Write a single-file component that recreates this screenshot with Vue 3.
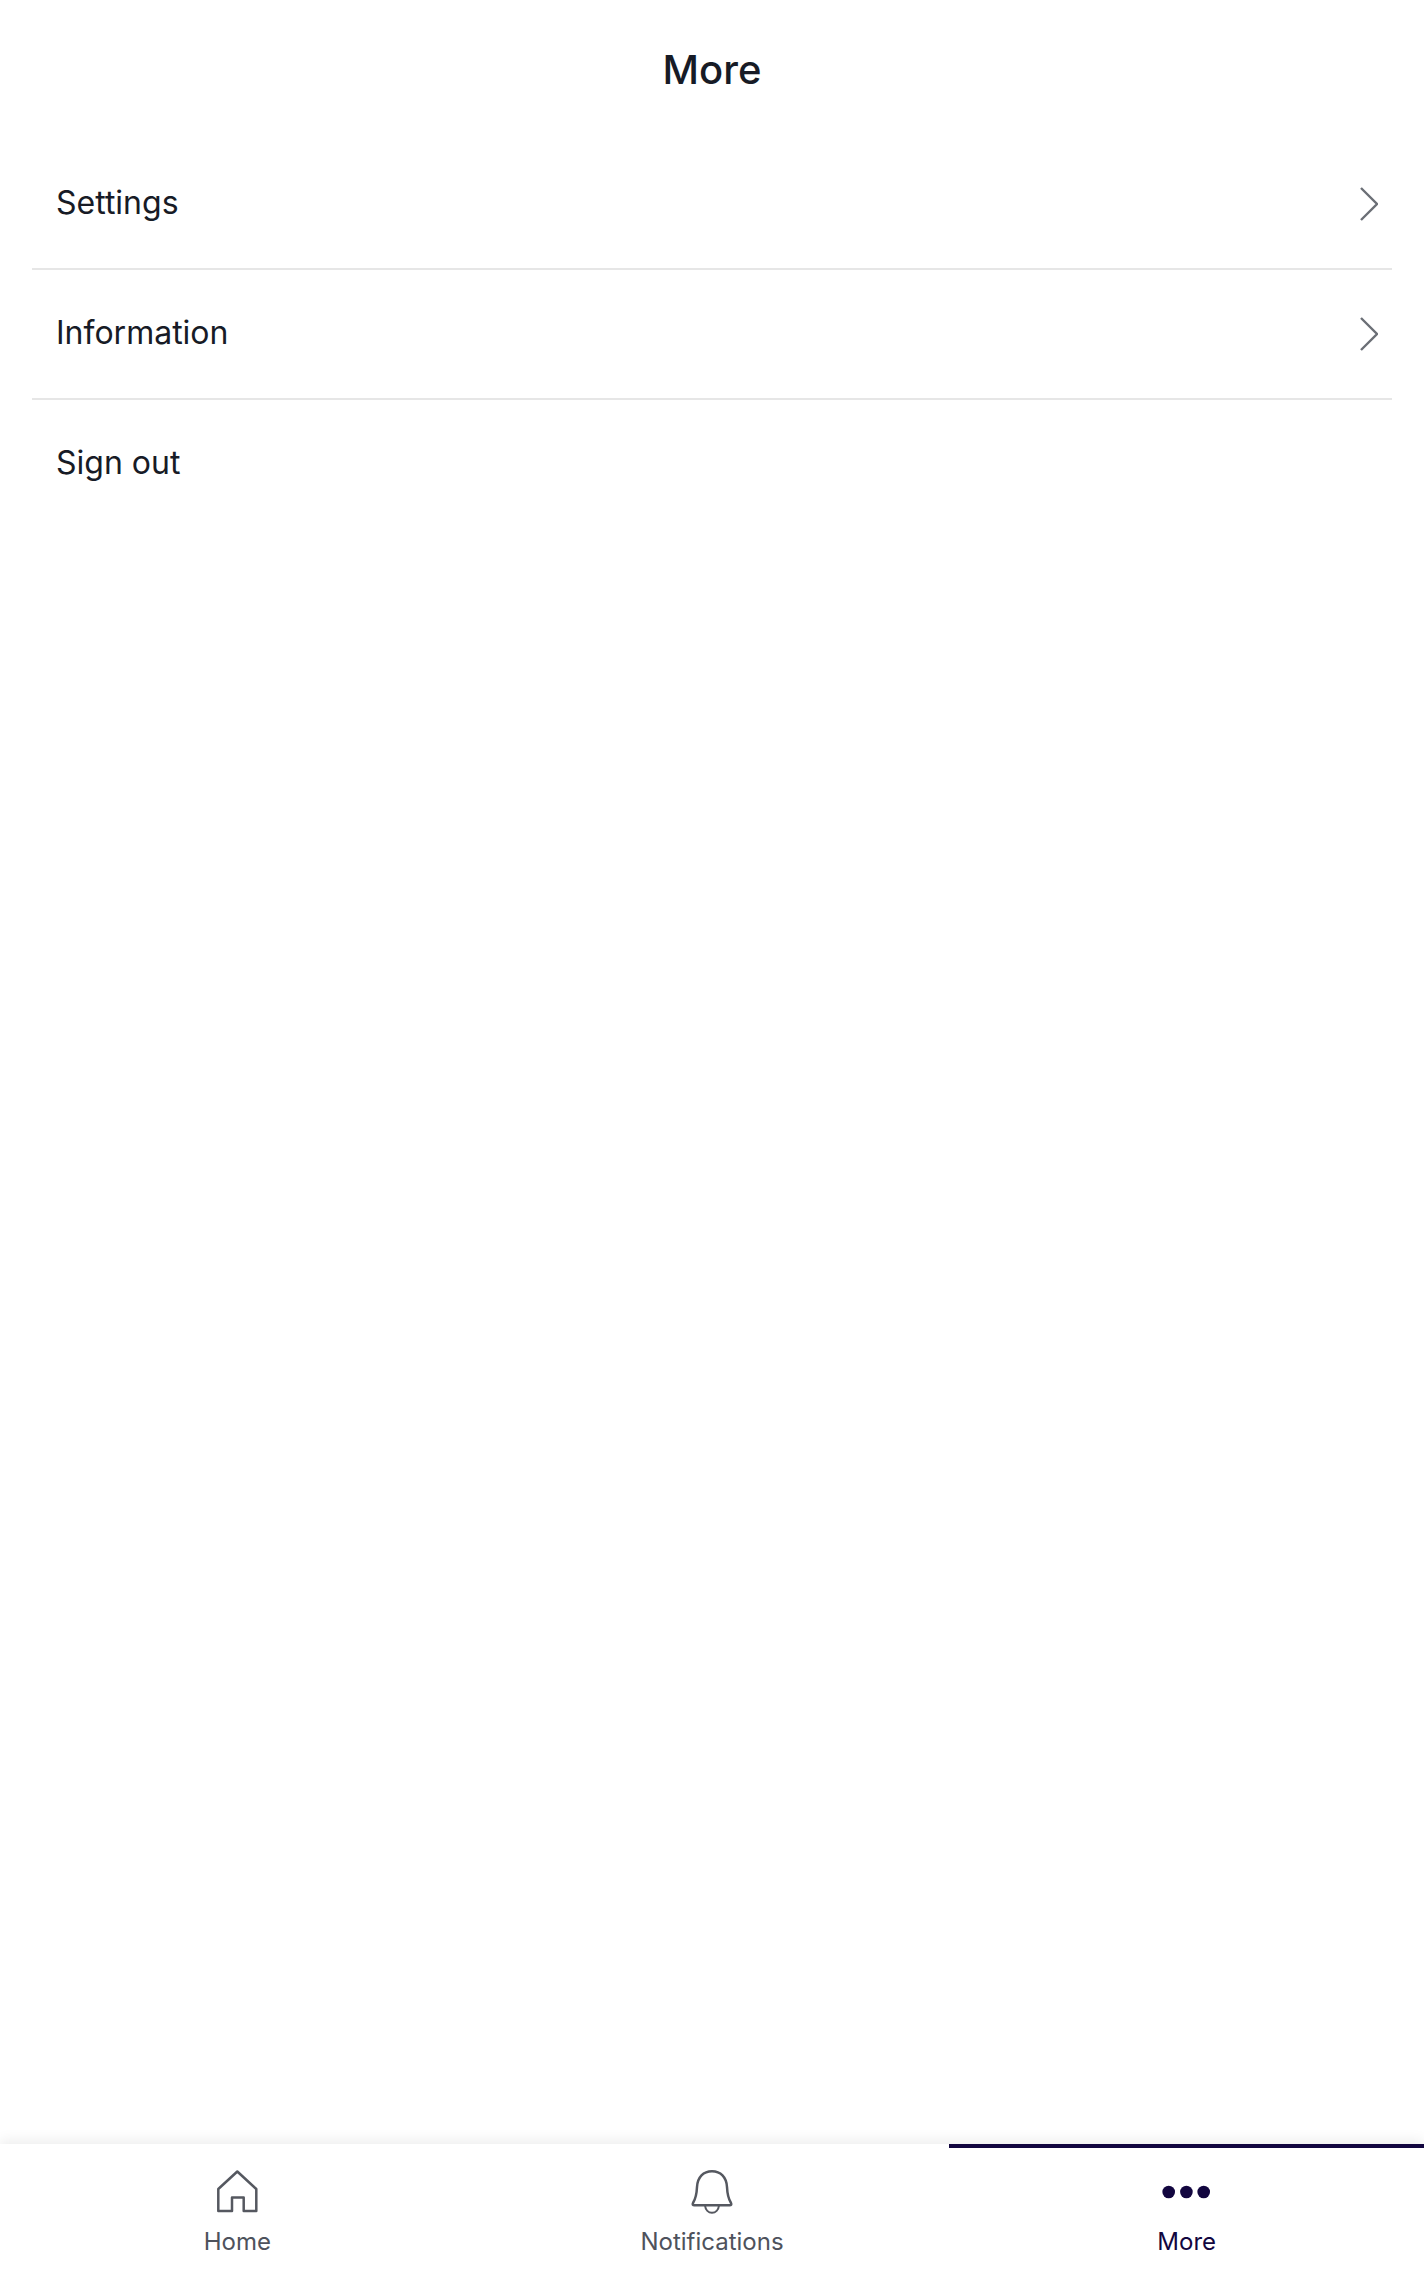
<template>
  <div class="page">
    <header class="title-bar">
      <h1>More</h1>
    </header>

    <main class="menu">
      <div v-for="item in menuItems" :key="item.label" class="menu-row">
        <span class="menu-label">{{ item.label }}</span>
        <svg
          v-if="item.hasChevron"
          class="chevron"
          viewBox="0 0 18 34"
          fill="none"
        >
          <path d="M1 1l16 16L1 33" stroke="#6b6f76" stroke-width="2.400" />
        </svg>
      </div>
    </main>

    <nav class="tab-bar">
      <div class="tab">
        <svg class="tab-icon" viewBox="0 0 44 44" fill="none">
          <path
            d="M3.300 41V19L22.300 1.500 41.300 19V41H28.700V27.500H17V41Z"
            stroke="#555860"
            stroke-width="2.500"
            stroke-linejoin="round"
          />
        </svg>
        <span class="tab-label">Home</span>
      </div>
      <div class="tab">
        <svg class="tab-icon" viewBox="0 0 44 44" fill="none">
          <path
            d="M22 1.200C13.500 1.200 7.500 7 7 17 6.700 24 5.500 29 3 33 2.200 34.500 3 35.300 4.300 35.300H39.700C41 35.300 41.800 34.500 41 33 38.500 29 37.300 24 37 17 36.500 7 30.500 1.200 22 1.200Z"
            stroke="#555860"
            stroke-width="2.500"
            stroke-linejoin="round"
          />
          <path
            d="M15 35.300C15.500 40 18.500 42.800 22 42.800S28.500 40 29 35.300"
            stroke="#555860"
            stroke-width="2"
          />
        </svg>
        <span class="tab-label">Notifications</span>
      </div>
      <div class="tab active">
        <svg class="tab-icon" viewBox="0 0 44 44">
          <circle cx="3.700" cy="22" r="6.300" fill="#12063f" />
          <circle cx="21.400" cy="22" r="6.300" fill="#12063f" />
          <circle cx="38.700" cy="22" r="6.300" fill="#12063f" />
        </svg>
        <span class="tab-label">More</span>
      </div>
    </nav>
  </div>
</template>

<script setup>
const menuItems = [
  { label: "Settings", hasChevron: true },
  { label: "Information", hasChevron: true },
  { label: "Sign out", hasChevron: false },
];
</script>

<style scoped>
.page {
  display: flex;
  flex-direction: column;
  height: 2276px;
  background: #fff;
  font-family: Inter, "Liberation Sans", sans-serif;
  font-feature-settings: "calt" 0;
}

.title-bar {
  height: 140px;
  box-sizing: border-box;
  padding-bottom: 1px;
  display: flex;
  align-items: center;
  justify-content: center;
}

.title-bar h1 {
  margin: 0;
  font-size: 40px;
  font-weight: 500;
  color: #171b26;
}

.menu {
  flex: 1;
  padding: 0 32px;
}

.menu-row {
  height: 128px;
  display: flex;
  align-items: center;
  justify-content: space-between;
  padding: 0 14px 0 24px;
  border-bottom: 2px solid #e6e6e6;
}

.menu-row:last-child {
  border-bottom: none;
}

.menu-label {
  margin-bottom: 4px;
  font-size: 32px;
  color: #171b26;
}

.chevron {
  width: 18px;
  height: 34px;
}

.tab-bar {
  height: 132px;
  display: flex;
  box-shadow: 0 -4px 12px rgba(0, 0, 0, 0.07);
}

.tab {
  flex: 1;
  display: flex;
  flex-direction: column;
  align-items: center;
  padding-top: 22px;
  border-top: 4px solid transparent;
  box-sizing: border-box;
}

.tab.active {
  border-top-color: #12063f;
}

.tab-icon {
  width: 44px;
  height: 44px;
  overflow: visible;
}

.tab-label {
  margin-top: 13px;
  font-size: 24px;
  color: #4e525c;
}

.tab.active .tab-label {
  color: #12063f;
}
</style>
